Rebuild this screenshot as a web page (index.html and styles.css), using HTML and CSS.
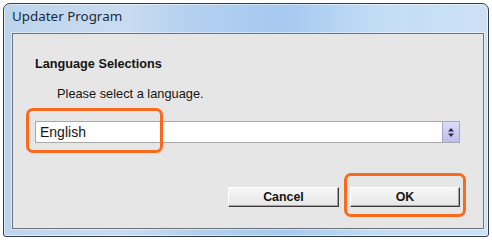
FILE: index.html
```html
<!DOCTYPE html>
<html lang="en">
<head>
  <meta charset="UTF-8">
  <title>Updater Program</title>
  <link rel="stylesheet" href="styles.css">
</head>
<body>
  <div class="window">
    <div class="titlebar">Updater Program</div>
    <div class="client">
      <h1 class="section-title">Language Selections</h1>
      <p class="prompt">Please select a language.</p>
      <div class="combo">
        <span class="combo-value">English</span>
        <span class="combo-spinner">
          <svg width="8" height="11" viewBox="0 0 8 11">
            <path d="M4 1 L7 4.5 H1 Z" fill="#2c2c44"/>
            <path d="M4 10 L7 6.5 H1 Z" fill="#2c2c44"/>
          </svg>
        </span>
      </div>
      <div class="actions">
        <button class="button cancel">Cancel</button>
        <button class="button ok">OK</button>
      </div>
      <!-- highlight marks over the screenshot -->
      <div class="callout callout-combo"></div>
      <div class="callout callout-ok"></div>
    </div>
  </div>
</body>
</html>
```

FILE: styles.css
```css
:root {
  --frame-border: #323c48;
  --client-bg: #e6e6e6;
  --client-border: #6f7378;
  --text: #151515;
  --callout: #fb6a1c;
}

body {
  margin: 0;
  background: #ffffff;
  font-family: "Liberation Sans", Arial, sans-serif;
  color: var(--text);
}

.window {
  box-sizing: border-box;
  width: 486px;
  height: 234px;
  margin: 3px;
  padding: 0 4px 7px 8px;
  border: 1px solid var(--frame-border);
  border-radius: 7px 7px 3px 3px;
  background: linear-gradient(90deg, #bcd4ec 0%, #c8dcf1 25%, #b2cfef 40%, #a6c9f1 58%, #c3ddf6 78%, #cde1f4 100%);
  box-shadow: inset 0 0 0 1px rgba(255, 255, 255, 0.55);
}

.titlebar {
  height: 29px;
  box-sizing: border-box;
  padding-top: 4px;
  font-family: "Noto Sans", "Open Sans", sans-serif;
  font-size: 13.4px;
  line-height: 17px;
  color: #1b2a3d;
}

.client {
  position: relative;
  box-sizing: border-box;
  width: 472px;
  height: 196px;
  padding: 23px 23px 0 22px;
  background: var(--client-bg);
  border: 1px solid var(--client-border);
  box-shadow: 0 0 0 1px rgba(255, 255, 255, 0.45);
}

.section-title {
  margin: 0;
  font-size: 12.7px;
  line-height: 14px;
  font-weight: bold;
}

.prompt {
  margin: 15px 0 0 22px;
  font-size: 12.8px;
  line-height: 15px;
}

.combo {
  display: flex;
  box-sizing: border-box;
  height: 22px;
  margin-top: 20px;
  background: #ffffff;
  border: 1px solid #a9a9a9;
}

.combo-value {
  flex: 1;
  padding-left: 4px;
  font-size: 14px;
  line-height: 20px;
}

.combo-spinner {
  display: flex;
  align-items: center;
  justify-content: center;
  width: 16px;
  border-left: 1px solid #a6a6c0;
  background: linear-gradient(#dedefa, #bcbcef);
}

.actions {
  display: flex;
  justify-content: flex-end;
  gap: 11px;
  margin-top: 44px;
}

.button {
  box-sizing: border-box;
  height: 20px;
  padding: 0;
  font-family: "Liberation Sans", Arial, sans-serif;
  font-size: 12.4px;
  font-weight: bold;
  color: var(--text);
  background: linear-gradient(#f7f7f7, #e6e6e6);
  border: 1px solid;
  border-color: #ffffff #3a3a3a #3a3a3a #ffffff;
  box-shadow: inset -1px -1px 0 #a3a3a3;
}

.button.cancel {
  width: 111px;
}

.button.ok {
  width: 110px;
}

.callout {
  position: absolute;
  box-sizing: border-box;
  border: 3px solid var(--callout);
  border-radius: 7px;
}

.callout-combo {
  left: 13px;
  top: 74px;
  width: 137px;
  height: 45px;
}

.callout-ok {
  left: 331px;
  top: 139px;
  width: 122px;
  height: 44px;
}
```
